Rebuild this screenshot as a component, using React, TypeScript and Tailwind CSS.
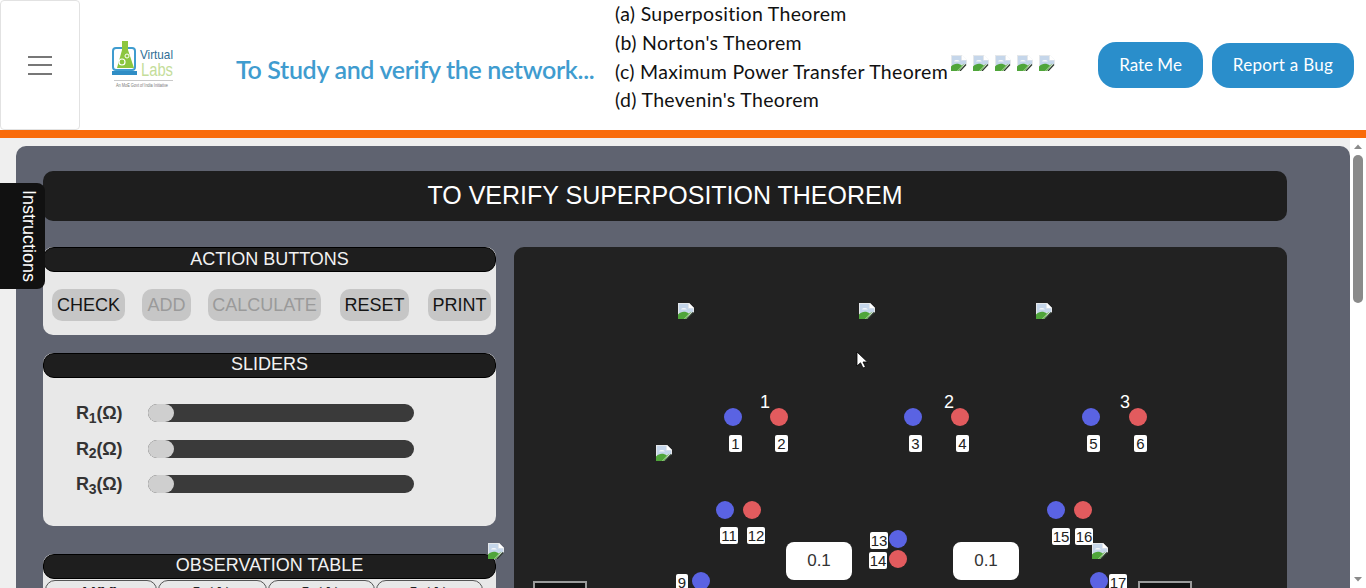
import React from "react";

function Broken({ className = "" }: { className?: string }) {
  return (
    <svg width="16" height="16" viewBox="0 0 16 16" className={className}>
      <path d="M0 0H11L16 5V9L8 16H0Z" fill="#e4e7ea" />
      <path d="M1 1H10V5.5H15V9L1 11Z" fill="#c5d6ea" />
      <path d="M3 6.5C4 4.6 7.5 4.6 8.8 6.5Z" fill="#f4f6f8" />
      <path d="M11 0L16 5H11Z" fill="#ffffff" />
      <path d="M0 16V11.5C3 8.5 7 7.8 11 10.5L6 16Z" fill="#4fa53a" />
      <path d="M6 16L12 9.5L13.5 8.6L8 16Z" fill="#6fbb55" />
      <path d="M9 16L15 9.5" fill="none" stroke="#2c3a2c" strokeWidth="1.2" />
    </svg>
  );
}

function PanelHead({ children, lead = "leading-[21px]" }: { children: React.ReactNode; lead?: string }) {
  return (
    <div className={`h-[25px] rounded-[11px] border border-black bg-[#1e1e1e] text-center text-[18px] text-[#f2f2f2] ${lead}`}>
      {children}
    </div>
  );
}

function Slider({ n }: { n: number }) {
  return (
    <div className="flex h-[18px] items-center">
      <div className="w-[72px] text-[18px] font-bold leading-[18px] tracking-[-0.2px] text-[#333333]">
        R<sub className="text-[14px]">{n}</sub>(Ω)
      </div>
      <div className="h-[18px] w-[266px] rounded-[9px] bg-[#3a3a3a]">
        <div className="h-[18px] w-[26px] rounded-[9px] bg-[#cfcfcf]" />
      </div>
    </div>
  );
}

function ActionButton({ label, off, w }: { label: string; off?: boolean; w: string }) {
  return (
    <div
      className={`flex h-[32px] items-center justify-center rounded-[10px] bg-[#c6c6c6] text-[18px] ${w} ${
        off ? "text-[#9a9a9a]" : "text-[#151515]"
      }`}
    >
      {label}
    </div>
  );
}

const dots: { c: string; pos: string }[] = [
  { c: "bg-[#5a63e3]", pos: "left-[210px] top-[161px]" },
  { c: "bg-[#e25b5e]", pos: "left-[256px] top-[161px]" },
  { c: "bg-[#5a63e3]", pos: "left-[390px] top-[161px]" },
  { c: "bg-[#e25b5e]", pos: "left-[437px] top-[161px]" },
  { c: "bg-[#5a63e3]", pos: "left-[568px] top-[161px]" },
  { c: "bg-[#e25b5e]", pos: "left-[615px] top-[161px]" },
  { c: "bg-[#5a63e3]", pos: "left-[202px] top-[254px]" },
  { c: "bg-[#e25b5e]", pos: "left-[229px] top-[254px]" },
  { c: "bg-[#5a63e3]", pos: "left-[375px] top-[283px]" },
  { c: "bg-[#e25b5e]", pos: "left-[375px] top-[303px]" },
  { c: "bg-[#5a63e3]", pos: "left-[533px] top-[254px]" },
  { c: "bg-[#e25b5e]", pos: "left-[560px] top-[254px]" },
  { c: "bg-[#5a63e3]", pos: "left-[178px] top-[325px]" },
  { c: "bg-[#5a63e3]", pos: "left-[576px] top-[325px]" },
];

const tags: { t: string; pos: string }[] = [
  { t: "1", pos: "left-[215px] top-[188px] w-[13px]" },
  { t: "2", pos: "left-[261px] top-[188px] w-[13px]" },
  { t: "3", pos: "left-[395px] top-[188px] w-[13px]" },
  { t: "4", pos: "left-[442px] top-[188px] w-[13px]" },
  { t: "5", pos: "left-[573px] top-[188px] w-[13px]" },
  { t: "6", pos: "left-[620px] top-[188px] w-[13px]" },
  { t: "11", pos: "left-[206px] top-[280px] w-[18px]" },
  { t: "12", pos: "left-[233px] top-[280px] w-[18px]" },
  { t: "13", pos: "left-[356px] top-[285px] w-[18px]" },
  { t: "14", pos: "left-[355px] top-[305px] w-[18px]" },
  { t: "15", pos: "left-[538px] top-[281px] w-[18px]" },
  { t: "16", pos: "left-[561px] top-[281px] w-[18px]" },
  { t: "9", pos: "left-[162px] top-[327px] w-[12px]" },
  { t: "17", pos: "left-[595px] top-[327px] w-[18px]" },
];

const nums: { t: string; pos: string }[] = [
  { t: "1", pos: "left-[246px] top-[144px]" },
  { t: "2", pos: "left-[430px] top-[144px]" },
  { t: "3", pos: "left-[606px] top-[144px]" },
];

const icons: string[] = [
  "left-[164px] top-[56px]",
  "left-[345px] top-[56px]",
  "left-[522px] top-[56px]",
  "left-[142px] top-[198px]",
  "left-[578px] top-[296px]",
];

export default function App() {
  return (
    <div className="relative flex h-screen flex-col overflow-hidden bg-[#efefef] font-['Liberation_Sans',Arial,sans-serif]">
      {/* Top bar */}
      <header className="flex h-[130px] shrink-0 items-center bg-white font-['Lato','Open_Sans',sans-serif]">
        <div className="flex h-[130px] w-[80px] shrink-0 flex-col items-center justify-center gap-[6.5px] rounded-[4px] border border-[#e2e2e2]">
          <span className="h-[2px] w-[24px] bg-[#777777]" />
          <span className="h-[2px] w-[24px] bg-[#777777]" />
          <span className="h-[2px] w-[24px] bg-[#777777]" />
        </div>
        <div className="ml-[30px] w-[126px] shrink-0">
          <svg width="64" height="50" viewBox="0 0 64 50" className="block">
            <rect x="3" y="8" width="22" height="22" rx="3" fill="none" stroke="#3f9ccf" strokeWidth="2" />
            <rect x="2" y="31" width="25" height="4" fill="#2f8dc5" />
            <path d="M12 1H18V10L24 28H7L12 10Z" fill="#8cc63f" />
            <circle cx="12" cy="22" r="3" fill="none" stroke="#ffffff" strokeWidth="1.2" />
            <circle cx="17" cy="16" r="2" fill="none" stroke="#ffffff" strokeWidth="1" />
            <text x="30" y="19" fontSize="13" fill="#2f6f96" fontFamily="Liberation Sans, sans-serif" textLength="33" lengthAdjust="spacingAndGlyphs">Virtual</text>
            <text x="31" y="36" fontSize="18" fill="#c4dd9a" fontFamily="Liberation Sans, sans-serif" textLength="32" lengthAdjust="spacingAndGlyphs">Labs</text>
            <rect x="4" y="40" width="59" height="1" fill="#c9c9c9" />
            <text x="6" y="47" fontSize="5" fill="#777777" fontFamily="Liberation Sans, sans-serif" textLength="52" lengthAdjust="spacingAndGlyphs">An MoE Govt of India Initiative</text>
          </svg>
        </div>
        <div className="mt-[10px] w-[379px] shrink-0 text-[25px] font-semibold tracking-[-0.33px] text-[#3f9ccf]">
          To Study and verify the network...
        </div>
        <div className="mb-[15px] w-[336px] shrink-0 text-[19.5px] leading-[28.6px] tracking-[0.32px] text-[#111111]">
          <div>(a) Superposition Theorem</div>
          <div>(b) Norton's Theorem</div>
          <div>(c) Maximum Power Transfer Theorem</div>
          <div>(d) Thevenin's Theorem</div>
        </div>
        <div className="mb-[5px] flex w-[147px] shrink-0 gap-[6px]">
          <Broken />
          <Broken />
          <Broken />
          <Broken />
          <Broken />
        </div>
        <div className="flex items-center gap-[9px]">
          <div className="flex h-[46px] w-[105px] items-center justify-center rounded-[18px] bg-[#2a8ecb] text-[17px] text-white">
            Rate Me
          </div>
          <div className="flex h-[45px] w-[142px] items-center justify-center rounded-[18px] bg-[#2a8ecb] text-[17px] tracking-[0.3px] text-white">
            Report a Bug
          </div>
        </div>
      </header>
      <div className="h-[8px] shrink-0 bg-[#f96b0a]" />

      {/* Scrolling area */}
      <div className="flex min-h-0 flex-1">
        <main className="min-w-0 flex-1 overflow-hidden pl-[16px] pt-[8px]">
          <div className="rounded-[10px] bg-[#5f6370] pb-[40px] pl-[27px] pr-[63px] pt-[25px]">
            <div className="flex h-[50px] items-center justify-center rounded-[10px] bg-[#1e1e1e] text-[25px] text-white">
              TO VERIFY SUPERPOSITION THEOREM
            </div>
            <div className="mt-[26px] flex gap-[18px]">
              <div className="relative w-[453px] shrink-0">
                <section className="h-[88px] rounded-[10px] bg-[#e8e8e8]">
                  <PanelHead lead="leading-[22px]">ACTION BUTTONS</PanelHead>
                  <div className="flex pl-[9px] pt-[17px]">
                    <ActionButton label="CHECK" w="w-[73px]" />
                    <ActionButton label="ADD" off w="ml-[17px] w-[49px]" />
                    <ActionButton label="CALCULATE" off w="ml-[17px] w-[113px]" />
                    <ActionButton label="RESET" w="ml-[19px] w-[69px]" />
                    <ActionButton label="PRINT" w="ml-[19px] w-[63px]" />
                  </div>
                </section>
                <section className="mt-[18px] h-[173px] rounded-[10px] bg-[#e8e8e8]">
                  <PanelHead>SLIDERS</PanelHead>
                  <div className="flex flex-col gap-[17.5px] pl-[33px] pt-[26px]">
                    <Slider n={1} />
                    <Slider n={2} />
                    <Slider n={3} />
                  </div>
                </section>
                <section className="mt-[28px] rounded-[10px] bg-[#e8e8e8] pb-[20px]">
                  <PanelHead>OBSERVATION TABLE</PanelHead>
                  <div className="flex gap-[1px] pl-[2px] pt-[1px]">
                    <div className="h-[40px] w-[112px] rounded-t-[10px] border border-[#555555] text-center text-[18px] font-bold text-[#222222]">V(V)</div>
                    <div className="h-[40px] w-[109px] rounded-t-[10px] border border-[#555555] text-center font-['Liberation_Serif',serif] text-[18px] font-bold text-[#222222]">I<sub>1</sub>(A)</div>
                    <div className="h-[40px] w-[107px] rounded-t-[10px] border border-[#555555] text-center font-['Liberation_Serif',serif] text-[18px] font-bold text-[#222222]">I<sub>2</sub>(A)</div>
                    <div className="h-[40px] w-[107px] rounded-t-[10px] border border-[#555555] text-center font-['Liberation_Serif',serif] text-[18px] font-bold text-[#222222]">I<sub>3</sub>(A)</div>
                  </div>
                </section>
                <Broken className="absolute left-[445px] top-[296px]" />
              </div>

              {/* Circuit canvas */}
              <div className="relative h-[560px] min-w-0 flex-1 rounded-[10px] bg-[#222222]">
                {icons.map((pos) => (
                  <Broken key={pos} className={`absolute ${pos}`} />
                ))}
                {dots.map((d) => (
                  <div key={d.pos} className={`absolute h-[18px] w-[18px] rounded-full ${d.c} ${d.pos}`} />
                ))}
                {tags.map((t) => (
                  <div
                    key={t.t}
                    className={`absolute h-[17px] rounded-[2px] bg-white text-center text-[15px] leading-[17px] text-[#222222] ${t.pos}`}
                  >
                    {t.t}
                  </div>
                ))}
                {nums.map((n) => (
                  <div key={n.t} className={`absolute text-[18px] leading-[22px] text-white ${n.pos}`}>
                    {n.t}
                  </div>
                ))}
                <div className="absolute left-[272px] top-[295px] flex h-[38px] w-[66px] items-center justify-center rounded-[8px] bg-white text-[17px] text-[#333333]">
                  0.1
                </div>
                <div className="absolute left-[439px] top-[295px] flex h-[38px] w-[66px] items-center justify-center rounded-[8px] bg-white text-[17px] text-[#333333]">
                  0.1
                </div>
                <div className="absolute left-[19px] top-[334px] h-[40px] w-[54px] border-2 border-[#9a9a9a] bg-[#111111]" />
                <div className="absolute left-[624px] top-[334px] h-[40px] w-[54px] border-2 border-[#9a9a9a] bg-[#111111]" />
                <svg width="12" height="18" viewBox="0 0 12 18" className="absolute left-[342px] top-[104px]">
                  <path d="M1 1V15L4.5 11.8L7 17L9.5 16L7 11H11.5Z" fill="#ffffff" stroke="#000000" strokeWidth="0.8" />
                </svg>
              </div>
            </div>
          </div>
        </main>

        {/* Scrollbar */}
        <div className="relative flex w-[16px] shrink-0 flex-col items-center bg-white">
          <svg width="16" height="17" viewBox="0 0 16 17" className="shrink-0">
            <path d="M4 11L8 6.5L12 11Z" fill="#8a8a8a" />
          </svg>
          <div className="h-[148px] w-[10px] rounded-[5px] bg-[#8a8a8a]" />
          <div className="flex-1" />
          <svg width="16" height="17" viewBox="0 0 16 17" className="shrink-0">
            <path d="M4 6L8 10.5L12 6Z" fill="#8a8a8a" />
          </svg>
        </div>
      </div>

      {/* Instructions tab */}
      <div className="absolute left-0 top-[183px] flex h-[106px] w-[45px] items-center justify-center rounded-r-[8px] bg-[#111111] pl-[12px] text-[18px] text-white [writing-mode:vertical-rl]">
        Instructions
      </div>
    </div>
  );
}
